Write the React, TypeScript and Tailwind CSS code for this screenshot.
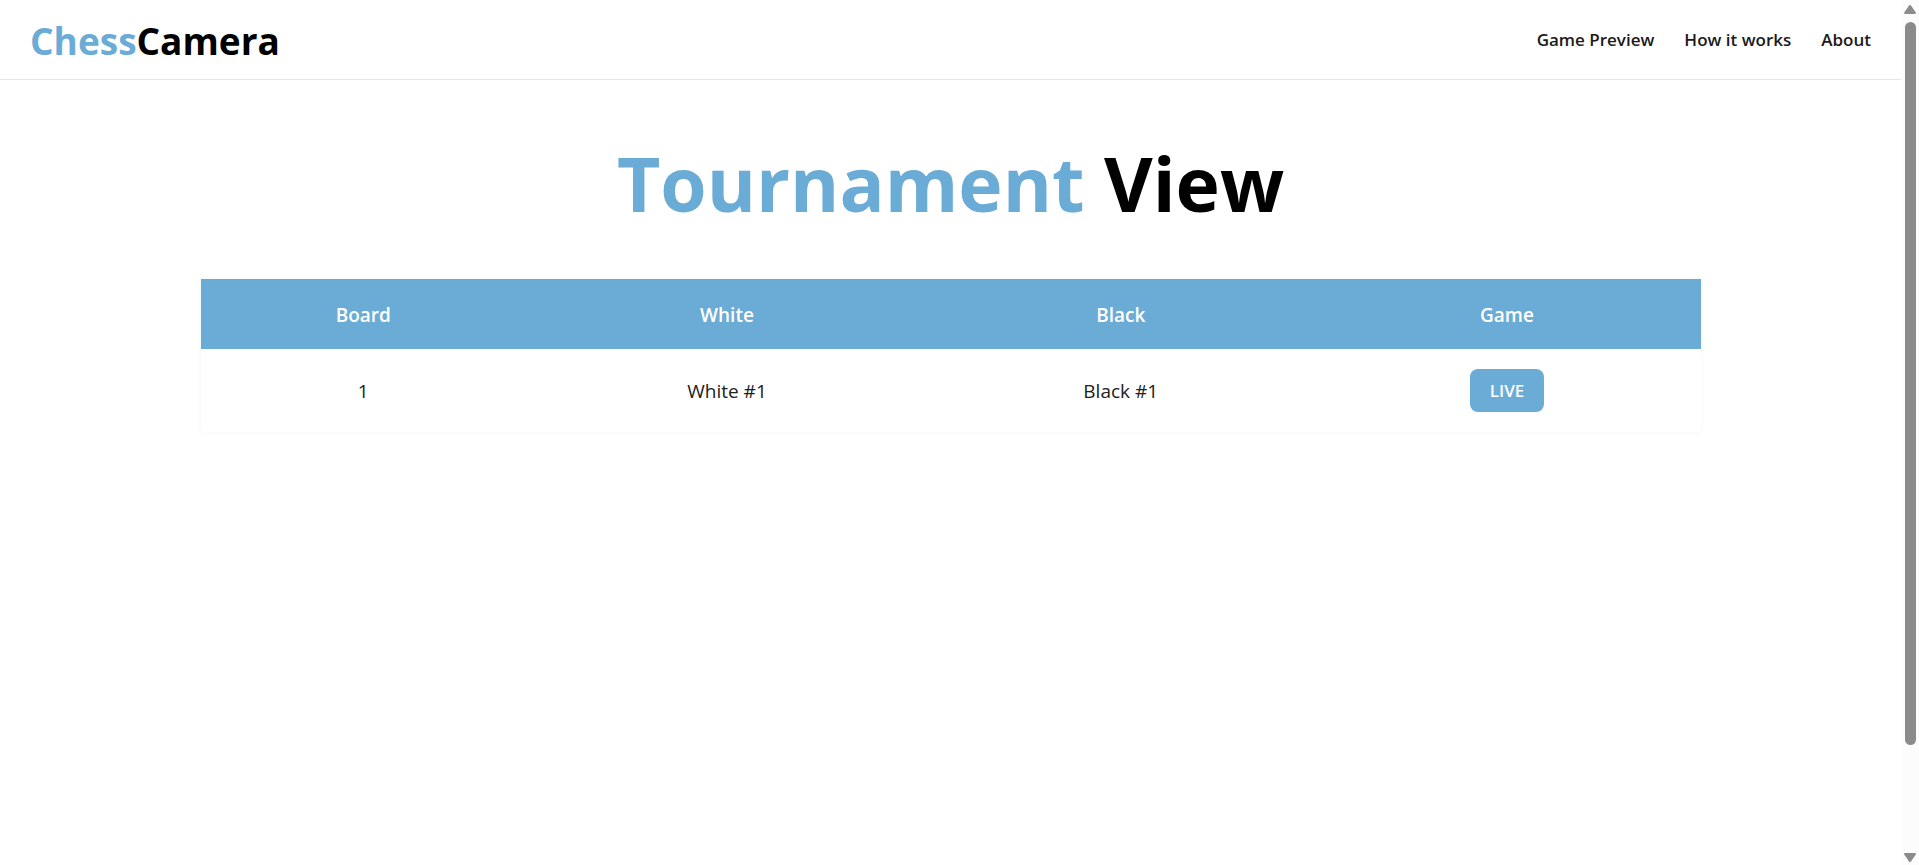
const navLinks = ["Game Preview", "How it works", "About"];

const columns = [
  { label: "Board", width: "w-[21.7%]" },
  { label: "White", width: "w-[26.8%]" },
  { label: "Black", width: "w-[25.7%]" },
  { label: "Game", width: "w-[25.8%]" },
];

const games = [{ board: 1, white: "White #1", black: "Black #1" }];

function Header() {
  return (
    <header className="flex h-20 items-center justify-between border-b border-[#e5e5e5] px-[30px]">
      <a href="#" className="pt-0.5 text-[37px] leading-[54px] font-bold text-black">
        <span className="text-[#6bacd6]">Chess</span>Camera
      </a>
      <nav className="flex gap-[30px] text-[17px] font-semibold text-[#1a1a1a]">
        {navLinks.map((label) => (
          <a key={label} href="#">
            {label}
          </a>
        ))}
      </nav>
    </header>
  );
}

function GamesTable() {
  return (
    <table className="mx-auto w-full max-w-[1500px] table-fixed text-center text-[19px] shadow-[0_0_5px_rgba(0,0,0,0.05)]">
      <thead className="bg-[#6bacd6] text-white">
        <tr className="h-[70px]">
          {columns.map(({ label, width }) => (
            <th key={label} scope="col" className={`${width} pt-0.5 font-semibold`}>
              {label}
            </th>
          ))}
        </tr>
      </thead>
      <tbody className="text-[#212121]">
        {games.map((game) => (
          <tr key={game.board} className="h-[83px]">
            <td className="pt-0.5">{game.board}</td>
            <td className="pt-0.5">{game.white}</td>
            <td className="pt-0.5">{game.black}</td>
            <td>
              <button
                type="button"
                className="h-[43px] rounded-lg bg-[#6bacd6] px-5 align-middle text-[17px] font-semibold text-white"
              >
                LIVE
              </button>
            </td>
          </tr>
        ))}
      </tbody>
    </table>
  );
}

function ScrollTrack() {
  return (
    <div
      aria-hidden="true"
      className="sticky top-0 flex h-screen w-[18px] shrink-0 flex-col items-center bg-[#fcfcfc] pt-1 pb-0.5"
    >
      <svg width="14" height="10" viewBox="0 0 14 10" fill="#8b8b8b">
        <path d="M6 1.6Q7 .4 8 1.6L12.8 8.6Q13.2 10 12 10H2Q.8 10 1.2 8.6Z" />
      </svg>
      <div className="mt-2 flex w-[11px] grow flex-col">
        <div className="h-[87%] rounded-full bg-[#8b8b8b]" />
      </div>
      <svg width="14" height="10" viewBox="0 0 14 10" fill="#8b8b8b">
        <path d="M6 8.4Q7 9.6 8 8.4L12.8 1.4Q13.2 0 12 0H2Q.8 0 1.2 1.4Z" />
      </svg>
    </div>
  );
}

export default function App() {
  return (
    <div className="flex min-h-screen bg-white font-['Open_Sans','Noto_Sans',sans-serif]">
      <div className="min-w-0 grow">
        <Header />
        <main className="px-8 pt-[50px]">
          <h1 className="mb-[42px] text-center text-[75px] leading-[107px] font-bold text-black">
            <span className="text-[#6bacd6]">Tournament</span> View
          </h1>
          <GamesTable />
        </main>
      </div>
      <ScrollTrack />
    </div>
  );
}
